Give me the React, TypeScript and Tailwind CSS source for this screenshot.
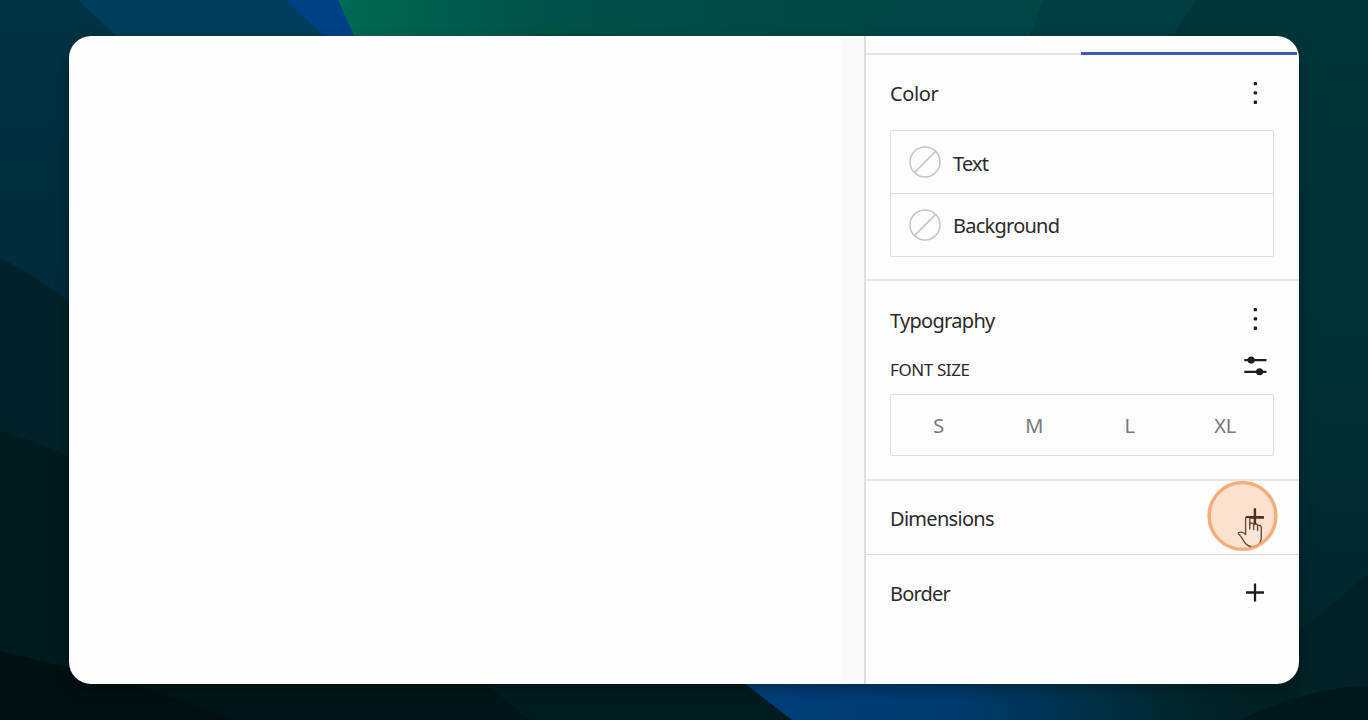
type LabelProps = {
  text: string;
  className?: string;
};

const sizes = ["S", "M", "L", "XL"];

function Wallpaper() {
  return (
    <svg className="absolute inset-0 h-full w-full" viewBox="0 0 1368 720" preserveAspectRatio="none">
      <defs>
        <linearGradient id="left" x1="0" y1="0" x2="0" y2="1">
          <stop offset="0" stopColor="#003444" />
          <stop offset="0.4" stopColor="#002b3a" />
          <stop offset="1" stopColor="#001c22" />
        </linearGradient>
        <linearGradient id="green" x1="340" y1="0" x2="1040" y2="0" gradientUnits="userSpaceOnUse">
          <stop offset="0" stopColor="#006a53" />
          <stop offset="0.3" stopColor="#005248" />
          <stop offset="0.75" stopColor="#004844" />
          <stop offset="1" stopColor="#004647" />
        </linearGradient>
        <linearGradient id="right" x1="0" y1="0" x2="0" y2="1">
          <stop offset="0" stopColor="#003739" />
          <stop offset="0.55" stopColor="#003035" />
          <stop offset="0.85" stopColor="#00272d" />
          <stop offset="1" stopColor="#002022" />
        </linearGradient>
        <linearGradient id="blue" x1="740" y1="0" x2="1260" y2="0" gradientUnits="userSpaceOnUse">
          <stop offset="0" stopColor="#003f7b" />
          <stop offset="0.4" stopColor="#003b70" />
          <stop offset="0.7" stopColor="#003044" />
          <stop offset="0.85" stopColor="#00262b" />
          <stop offset="1" stopColor="#002024" />
        </linearGradient>
      </defs>
      <rect width="700" height="720" fill="url(#left)" />
      <rect x="684" width="684" height="720" fill="url(#right)" />
      <path d="M78 0H340V120H205Z" fill="#003e5d" />
      <path d="M286 0H345L390 100Z" fill="#004086" />
      <path d="M338 0H1050L1020 50H361Z" fill="url(#green)" />
      <path d="M895 0H1043L1025 50H855Z" fill="#004649" />
      <path d="M1043 0H1195L1165 50H1025Z" fill="#003e42" />
      <path d="M0 258Q35 275 80 310V720H0Z" fill="#002228" />
      <path d="M0 431Q40 442 80 462V720H0Z" fill="#001b1f" />
      <path d="M1368 572Q1340 600 1290 638V720H1368Z" fill="#002227" />
      <path d="M100 675H500L540 720H100Z" fill="#001518" />
      <path d="M480 680H760L795 720H530Z" fill="#001c1e" />
      <path d="M0 651L110 678Q170 695 235 720H0Z" fill="#001013" />
      <path d="M730 672H1300V720H792Z" fill="url(#blue)" />
      <path d="M1240 720Q1310 687 1368 686V720Z" fill="#00171b" />
    </svg>
  );
}

function Label({ text, className = "" }: LabelProps) {
  return <span className={`leading-7 whitespace-nowrap text-[#2b2b2b] ${className}`}>{text}</span>;
}

function MoreIcon() {
  return (
    <svg className="h-8 w-8" viewBox="0 0 32 32" fill="#1e1e1e">
      <rect x="13.7" y="4.9" width="3.4" height="3.4" rx="1" />
      <rect x="13.7" y="14.2" width="3.4" height="3.4" rx="1" />
      <rect x="13.7" y="23.5" width="3.4" height="3.4" rx="1" />
    </svg>
  );
}

function PlusIcon() {
  return (
    <svg className="h-8 w-8" viewBox="0 0 32 32" stroke="#1e1e1e" strokeWidth="2.3">
      <path d="M6 15.5H24M15 6.5V24.5" />
    </svg>
  );
}

function SettingsIcon() {
  return (
    <svg className="h-8 w-8" viewBox="0 0 32 32" stroke="#1e1e1e" strokeWidth="2.3" fill="#1e1e1e">
      <path d="M4.3 10.1H26.5M4.3 21.8H26.5" />
      <circle cx="11.2" cy="10.1" r="2.4" />
      <circle cx="19.6" cy="21.8" r="2.4" />
    </svg>
  );
}

function ColorRow({ text, className }: LabelProps) {
  return (
    <div className="flex flex-1 items-center gap-3 pl-[18px]">
      <svg className="h-8 w-8" viewBox="0 0 32 32" fill="none" stroke="#c6c6c6" strokeWidth="1.5">
        <circle cx="16" cy="16" r="15" />
        <path d="M5.4 26.6L26.6 5.4" />
      </svg>
      <Label text={text} className={className} />
    </div>
  );
}

function ClickMarker() {
  return (
    <div className="absolute top-0 right-[21px] h-[71px] w-[71px]">
      <svg className="h-full w-full" viewBox="0 0 71 71" fill="none">
        <circle cx="35.5" cy="35" r="33.4" fill="#f97316" fillOpacity="0.2" />
        <g stroke="#654a3e" strokeWidth="1.4" strokeLinejoin="round" strokeLinecap="round">
          <path
            d="M38.6 53.5V38Q38.6 35.8 40.7 35.8Q42.8 35.8 42.8 38V42.8Q45.8 41 46.7 43.6Q49.6 42 50.6 44.4Q54.3 43.6 54.3 47V55.5Q54.3 61 51.6 63.5Q49.5 65.7 45.5 65.7Q41.5 65.7 39 63Q37 61 35.4 57.8Q34.2 55.6 32.3 53.8Q30.4 51.9 32.4 51.4Q35.8 50.4 38.6 53.5Z"
            fill="#fae4d6"
          />
          <path d="M42.8 42.5V48M46.7 43.5V48.5M50.6 44.5V49.5" />
        </g>
        <path d="M39 36H56M47.8 27.5V43" stroke="#4b2f22" strokeWidth="2" />
        <circle cx="35.5" cy="35" r="33.4" stroke="#f4a76f" strokeWidth="3.4" strokeOpacity="0.92" />
      </svg>
    </div>
  );
}

function Sidebar() {
  return (
    <aside className="flex w-[435px] shrink-0 flex-col border-l-2 border-[#dedede] font-['Noto_Sans','Open_Sans',sans-serif] text-[20px]">
      <div className="flex h-[19px] shrink-0 items-end">
        <div className="h-[2px] flex-1 bg-[#e4e5e7]" />
        <div className="mr-0.5 h-[3px] w-[216px] bg-[#4057bd]" />
      </div>

      <section className="flex h-[226px] shrink-0 flex-col border-b-2 border-[#e7e7e7] pt-[22px] pr-[25px] pl-6">
        <div className="flex h-8 items-center justify-between pr-[2px]">
          <Label text="Color" className="pt-px tracking-[-0.4px]" />
          <MoreIcon />
        </div>
        <div className="mt-[21px] flex h-[127px] flex-col divide-y divide-[#dedede] rounded-xs border border-[#dedede]">
          <ColorRow text="Text" className="pt-1 tracking-[-0.8px]" />
          <ColorRow text="Background" className="pt-0.5 tracking-[-0.75px]" />
        </div>
      </section>

      <section className="flex h-[200px] shrink-0 flex-col border-b-2 border-[#e7e7e7] pt-[22px] pr-[25px] pl-6">
        <div className="flex h-8 items-center justify-between pr-[2px]">
          <Label text="Typography" className="pt-[3px] tracking-[-0.7px]" />
          <MoreIcon />
        </div>
        <div className="mt-[15px] flex h-8 items-center justify-between pr-[2px]">
          <Label text="FONT SIZE" className="pt-[7px] text-[17px] tracking-[-0.4px]" />
          <SettingsIcon />
        </div>
        <div className="mt-3 grid h-[62px] grid-cols-4 items-center rounded-xs border border-[#dedede] text-center text-[#787878]">
          {sizes.map((size) => (
            <span key={size} className="pt-px tracking-[-0.2px]">
              {size}
            </span>
          ))}
        </div>
      </section>

      <section className="relative flex h-[74px] shrink-0 items-center justify-between border-b border-[#dadada] pr-[27px] pl-6">
        <Label text="Dimensions" className="pt-[3px] tracking-[-0.7px]" />
        <PlusIcon />
        <ClickMarker />
      </section>

      <section className="flex h-[76px] shrink-0 items-center justify-between pr-[27px] pl-6">
        <Label text="Border" className="pt-px tracking-[-0.8px]" />
        <PlusIcon />
      </section>
    </aside>
  );
}

export default function App() {
  return (
    <div className="relative h-[720px] w-[1368px] overflow-hidden bg-[#001c22] pt-9 pl-[69px]">
      <Wallpaper />
      <main className="relative flex h-[648px] w-[1230px] overflow-hidden rounded-[22px] bg-[#fdfdfd] shadow-[0_4px_14px_rgba(0,0,0,0.35)]">
        <div className="flex-1" />
        <div className="w-[23px] bg-[#fafafa]" />
        <Sidebar />
      </main>
    </div>
  );
}
